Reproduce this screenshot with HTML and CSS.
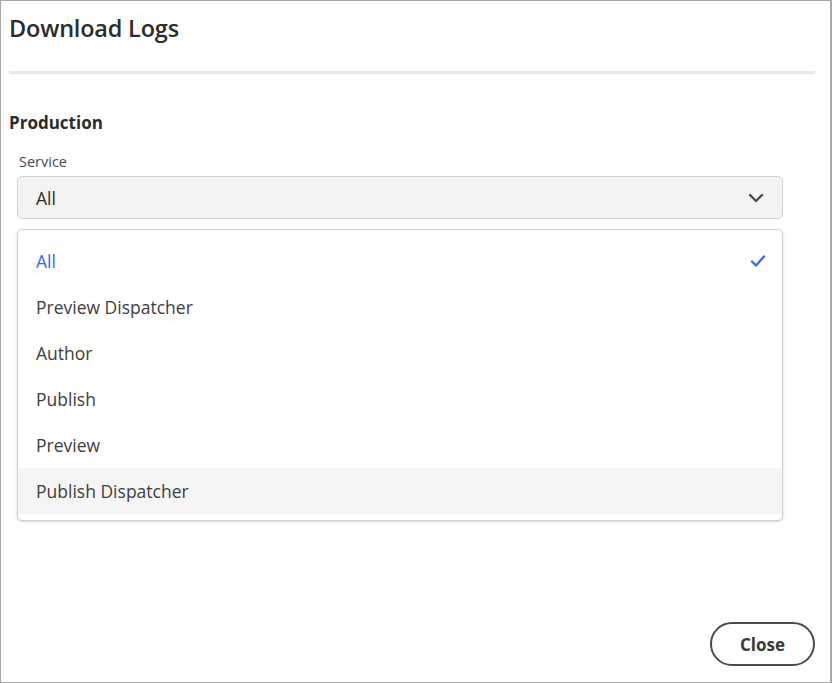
FILE: index.html
```html
<!DOCTYPE html>
<html>
<head>
<meta charset="utf-8">
<link rel="stylesheet" href="styles.css">
</head>
<body>
<div class="dialog">
  <h1 class="title">Download Logs</h1>
  <div class="divider"></div>
  <h2 class="section">Production</h2>
  <div class="field">
    <label class="label">Service</label>
    <div class="select">
      <span class="select-value">All</span>
      <svg class="chevron" width="16" height="10" viewBox="0 0 16 10"><path d="M2 2 L8 8 L14 2" fill="none" stroke="#4b4b4b" stroke-width="2.4" stroke-linecap="round" stroke-linejoin="round"/></svg>
    </div>
    <ul class="menu">
      <li class="item selected"><span>All</span>
        <svg class="check" width="16" height="14" viewBox="0 0 16 14"><path d="M2 7.5 L6 11.5 L14 2.5" fill="none" stroke="#2f6fdc" stroke-width="2.4" stroke-linecap="round" stroke-linejoin="round"/></svg>
      </li>
      <li class="item">Preview Dispatcher</li>
      <li class="item">Author</li>
      <li class="item">Publish</li>
      <li class="item">Preview</li>
      <li class="item hover">Publish Dispatcher</li>
    </ul>
  </div>
  <div class="footer">
    <button class="close">Close</button>
  </div>
</div>
</body>
</html>
```

FILE: styles.css
```css
html, body {
  margin: 0;
  padding: 0;
  background: #fff;
}
.dialog {
  width: 832px;
  height: 683px;
  box-sizing: border-box;
  border: 1px solid #a8a8a8;
  border-right-width: 2px;
  padding: 0 15px 0 8px;
  display: flex;
  flex-direction: column;
  font-family: "Open Sans", sans-serif;
  color: #2c2c2c;
}
.title {
  margin: 12px 0 0 0;
  font-size: 23.5px;
  font-weight: 600;
  line-height: 30px;
  letter-spacing: -0.2px;
}
.divider {
  height: 3px;
  background: #e8e8e8;
  margin-top: 28px;
}
.section {
  margin: 37px 0 0 0;
  font-size: 17px;
  font-weight: 700;
  line-height: 24px;
}
.field {
  display: flex;
  flex-direction: column;
  padding-left: 8px;
  padding-right: 32px;
}
.label {
  margin-top: 17px;
  margin-left: 2px;
  font-size: 14.5px;
  color: #4b4b4b;
  line-height: 20px;
}
.select {
  margin-top: 4px;
  height: 43px;
  box-sizing: border-box;
  background: #f3f3f3;
  border: 1px solid #d3d3d3;
  border-radius: 5px;
  display: flex;
  align-items: center;
  justify-content: space-between;
  padding: 0 18px 0 18px;
}
.select-value {
  font-size: 17.5px;
  color: #2c2c2c;
}
.menu {
  list-style: none;
  margin: 10px 0 0 0;
  padding: 8px 0 6px 0;
  border: 1px solid #d0d0d0;
  border-radius: 5px;
  box-shadow: 0 1px 3px rgba(0,0,0,0.15);
  background: #fff;
}
.item {
  height: 46px;
  display: flex;
  align-items: center;
  justify-content: space-between;
  padding: 0 16px 0 18px;
  font-size: 17.5px;
  color: #3e3e3e;
}
.item.selected {
  color: #2f6fdc;
}
.item.hover {
  background: #f5f5f5;
}
.footer {
  margin-top: auto;
  display: flex;
  justify-content: flex-end;
  padding-bottom: 16px;
}
.close {
  width: 105px;
  height: 44px;
  border: 2px solid #4b4b4b;
  border-radius: 22px;
  background: #fff;
  font-family: "Open Sans", sans-serif;
  font-weight: 700;
  font-size: 17px;
  color: #3a3a3a;
  padding: 0;
}
```
